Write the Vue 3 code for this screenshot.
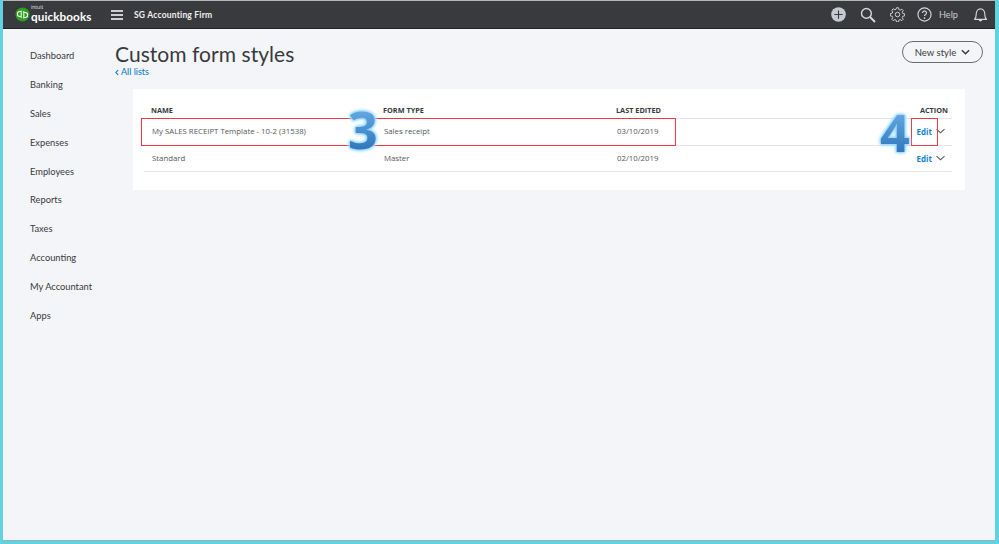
<template>
  <div class="frame">
    <div class="screen">
      <header class="topbar">
        <div class="brand">
          <svg class="qb" viewBox="0 0 16 16" width="15" height="15">
            <circle cx="8" cy="8" r="7.5" fill="#2ca01c" />
            <path d="M6.6 4.8H5.2a2.6 2.6 0 0 0 0 5.3h.7M6.6 3.8v8" fill="none" stroke="#fff" stroke-width="1.1" />
            <path d="M9.4 11.2h1.4a2.6 2.6 0 0 0 0-5.3h-.7M9.4 12.2v-8" fill="none" stroke="#fff" stroke-width="1.1" />
          </svg>
          <div class="wordmark">
            <span class="intuit">intuit</span>
            <span class="qbname">quickbooks</span>
          </div>
        </div>
        <svg class="burger" viewBox="0 0 12 10" width="12" height="10">
          <path d="M0 1h12M0 5h12M0 9h12" stroke="#fff" stroke-width="1.4" />
        </svg>
        <span class="firm">SG Accounting Firm</span>
        <div class="tools">
          <svg class="tool plus" viewBox="0 0 16 16" width="15" height="15">
            <circle cx="8" cy="8" r="7.8" fill="#c6c9d0" />
            <path d="M8 3.6v8.800M3.600 8h8.800" stroke="#393a3d" stroke-width="1.2" />
          </svg>
          <svg class="tool search" viewBox="0 0 16 16" width="16" height="16">
            <circle cx="6.400" cy="6.400" r="4.900" fill="none" stroke="#d4d7dc" stroke-width="1.400" />
            <path d="M10 10l5 5" stroke="#d4d7dc" stroke-width="1.900" />
          </svg>
          <svg class="tool gear" viewBox="0 0 16 16" width="15" height="15">
            <circle cx="8" cy="8" r="2.400" fill="none" stroke="#d4d7dc" stroke-width="1" />
            <path d="M6.900.8h2.200l.4 2 1.300.6 1.800-1.100 1.500 1.500-1.100 1.800.6 1.300 2 .4v2.200l-2 .4-.6 1.300 1.100 1.800-1.500 1.500-1.800-1.100-1.300.6-.4 2H6.900l-.4-2-1.300-.6-1.800 1.100-1.500-1.500 1.100-1.800-.6-1.300-2-.4V6.900l2-.4.6-1.300-1.100-1.800 1.500-1.500 1.800 1.100 1.300-.6z" fill="none" stroke="#d4d7dc" stroke-width="1" />
          </svg>
          <svg class="tool help" viewBox="0 0 16 16" width="15" height="15">
            <circle cx="8" cy="8" r="7" fill="none" stroke="#d4d7dc" stroke-width="1.200" />
            <path d="M5.900 6.300a2.100 2.100 0 1 1 3.200 1.800c-.7.4-1.100.8-1.100 1.600" fill="none" stroke="#d4d7dc" stroke-width="1.300" />
            <circle cx="8" cy="11.800" r=".9" fill="#d4d7dc" />
          </svg>
          <span class="helptext">Help</span>
          <svg class="tool bell" viewBox="0 0 16 16" width="15" height="16">
            <path d="M1.600 12.600c1.400-1.400 1.800-2.600 1.800-5.200C3.400 4 5.300 1.400 8 1.400s4.600 2.600 4.600 6c0 2.600.4 3.800 1.800 5.200z" fill="none" stroke="#d4d7dc" stroke-width="1.200" stroke-linejoin="round" />
            <path d="M6.300 13.200a1.800 1.800 0 0 0 3.400 0" fill="#d4d7dc" stroke="#d4d7dc" />
          </svg>
        </div>
      </header>
      <div class="body">
        <nav class="side">
          <a v-for="item in nav" :key="item">{{ item }}</a>
        </nav>
        <main class="main">
          <div class="titlebar">
            <div>
              <h1>Custom form styles</h1>
              <a class="back">
                <svg viewBox="0 0 5 8" width="4" height="7"><path d="M4 1L1 4l3 3" fill="none" stroke="#0077c5" stroke-width="1.300" /></svg>
                All lists
              </a>
            </div>
            <button class="newstyle">
              New style
              <svg viewBox="0 0 10 6" width="9" height="6"><path d="M1 1l4 4 4-4" fill="none" stroke="#393a3d" stroke-width="1.600" /></svg>
            </button>
          </div>
          <section class="card">
            <div class="row head">
              <span>NAME</span><span>FORM TYPE</span><span>LAST EDITED</span><span class="act">ACTION</span>
            </div>
            <div v-for="r in rows" :key="r.name" class="row item">
              <span>{{ r.name }}</span><span>{{ r.type }}</span><span>{{ r.date }}</span>
              <span class="act">
                <a class="edit">Edit</a>
                <svg viewBox="0 0 10 6" width="9" height="6"><path d="M.6.8L5 5 9.400.8" fill="none" stroke="#55575c" stroke-width="1.200" /></svg>
              </span>
            </div>
            <i class="mark box-row"></i>
            <i class="mark box-edit"></i>
            <span class="num n3">3</span>
            <span class="num n4">4</span>
          </section>
        </main>
      </div>
    </div>
  </div>
</template>

<script setup>
const nav = ['Dashboard', 'Banking', 'Sales', 'Expenses', 'Employees', 'Reports', 'Taxes', 'Accounting', 'My Accountant', 'Apps']
const rows = [
  { name: 'My SALES RECEIPT Template - 10-2 (31538)', type: 'Sales receipt', date: '03/10/2019' },
  { name: 'Standard', type: 'Master', date: '02/10/2019' }
]
</script>

<style>
html, body { margin: 0; background: #5fd0e0; }
</style>

<style scoped>
.frame {
  width: 999px;
  height: 544px;
  box-sizing: border-box;
  padding: 0 4px 3px 3px;
  background: #62d1e2;
  overflow: hidden;
  font-family: "Open Sans", "Liberation Sans", sans-serif;
}
.screen {
  height: 100%;
  display: flex;
  flex-direction: column;
  background: #f4f5f8;
  border-top: 1px solid #b5b5b5;
  border-bottom: 1px solid #8fb4bb;
  box-sizing: border-box;
}
.topbar {
  height: 28px;
  flex: none;
  display: flex;
  align-items: center;
  background: #393a3d;
  color: #fff;
  padding-left: 12px;
  padding-right: 7px;
  border-bottom: 1px solid #222;
  box-sizing: border-box;
}
.brand { display: flex; align-items: center; gap: 1px; width: 96px; }
.wordmark { display: flex; flex-direction: column; margin-top: -3px; }
.intuit { font-size: 5px; line-height: 6px; color: #e8e8e8; }
.qbname { font-family: "Lato", sans-serif; font-size: 11.700px; line-height: 12px; font-weight: 700; letter-spacing: .1px; }
.burger { flex: none; margin-right: 11px; }
.firm { font-family: "Lato", sans-serif; font-size: 8.500px; font-weight: 700; letter-spacing: .2px; color: #f0f0f0; }
.tools { margin-left: auto; display: flex; align-items: center; }
.tool { flex: none; }
.search { margin-left: 14px; }
.gear { margin-left: 14px; }
.help { margin-left: 12px; }
.helptext { font-family: "Lato", sans-serif; font-size: 9.200px; color: #c8cacd; margin-left: 7px; margin-right: 15px; }
.body { flex: 1; display: flex; min-height: 0; }
.side {
  width: 100px;
  flex: none;
  padding: 20px 0 0 27px;
  box-sizing: border-box;
  display: flex;
  flex-direction: column;
  gap: 14.900px;
}
.side a {
  font-family: "Lato", sans-serif;
  font-size: 9.300px;
  line-height: 14px;
  color: #393a3d;
}
.main { flex: 1; padding: 0 12px; min-width: 0; position: relative; }
.titlebar { display: flex; justify-content: space-between; align-items: flex-start; padding-top: 12px; }
h1 {
  margin: 0;
  font-family: "Lato", sans-serif;
  font-weight: 400;
  font-size: 21px;
  line-height: 26px;
  color: #393a3d;
  letter-spacing: .05px;
}
.back { display: flex; align-items: center; gap: 2px; font-family: "Lato", sans-serif; font-size: 9px; line-height: 10px; color: #0077c5; }
.newstyle {
  height: 22px;
  width: 81px;
  border: 1px solid #6b6c72;
  border-radius: 11px;
  background: transparent;
  font-family: "Lato", sans-serif;
  font-size: 9.500px;
  color: #393a3d;
  display: flex;
  align-items: center;
  justify-content: center;
  gap: 5px;
  padding: 0;
}
.card {
  position: relative;
  margin: 12px 18px 0;
  background: #fff;
  padding: 11px 13px 18px 11px;
  box-sizing: border-box;
  height: 101px;
}
.row {
  display: grid;
  grid-template-columns: 232px 233px 1fr 60px;
  align-items: center;
  padding: 0 5px 0 8px;
  font-size: 7.800px;
  color: #55575c;
}
.head {
  height: 19px;
  font-size: 7.300px;
  font-weight: 700;
  color: #393a3d;
  border-bottom: 1px solid #e3e5e8;
  box-sizing: border-box;
  padding-left: 7px;
  padding-right: 4px;
  padding-top: 1px;
}
.item {
  height: 26.500px;
  padding-bottom: 1px;
  border-bottom: 1px solid #e3e5e8;
  box-sizing: border-box;
}
.item + .item { padding-bottom: 0; }
.act { text-align: right; display: flex; justify-content: flex-end; align-items: center; gap: 4px; }
.item .act { padding-right: 2px; }
.edit { color: #1583cf; font-size: 8px; font-weight: 700; }
.mark { position: absolute; border: 1px solid #ee3a44; box-sizing: border-box; }
.box-row { left: 8px; top: 29px; width: 535px; height: 28px; }
.box-edit { left: 778px; top: 29px; width: 27px; height: 28px; }
.num {
  position: absolute;
  font-family: "Open Sans", sans-serif;
  font-weight: 700;
  font-size: 52px;
  line-height: 52px;
  background: linear-gradient(#6db2ea, #2a6fb5);
  -webkit-background-clip: text;
  background-clip: text;
  color: transparent;
  filter: drop-shadow(0 0 1.500px #8fd6fb) drop-shadow(0 0 1px #8fd6fb) drop-shadow(0 0 1px #b5e6fd);
}
.n3 { left: 215px; top: 14px; }
.n4 { left: 747px; top: 17px; }
</style>
